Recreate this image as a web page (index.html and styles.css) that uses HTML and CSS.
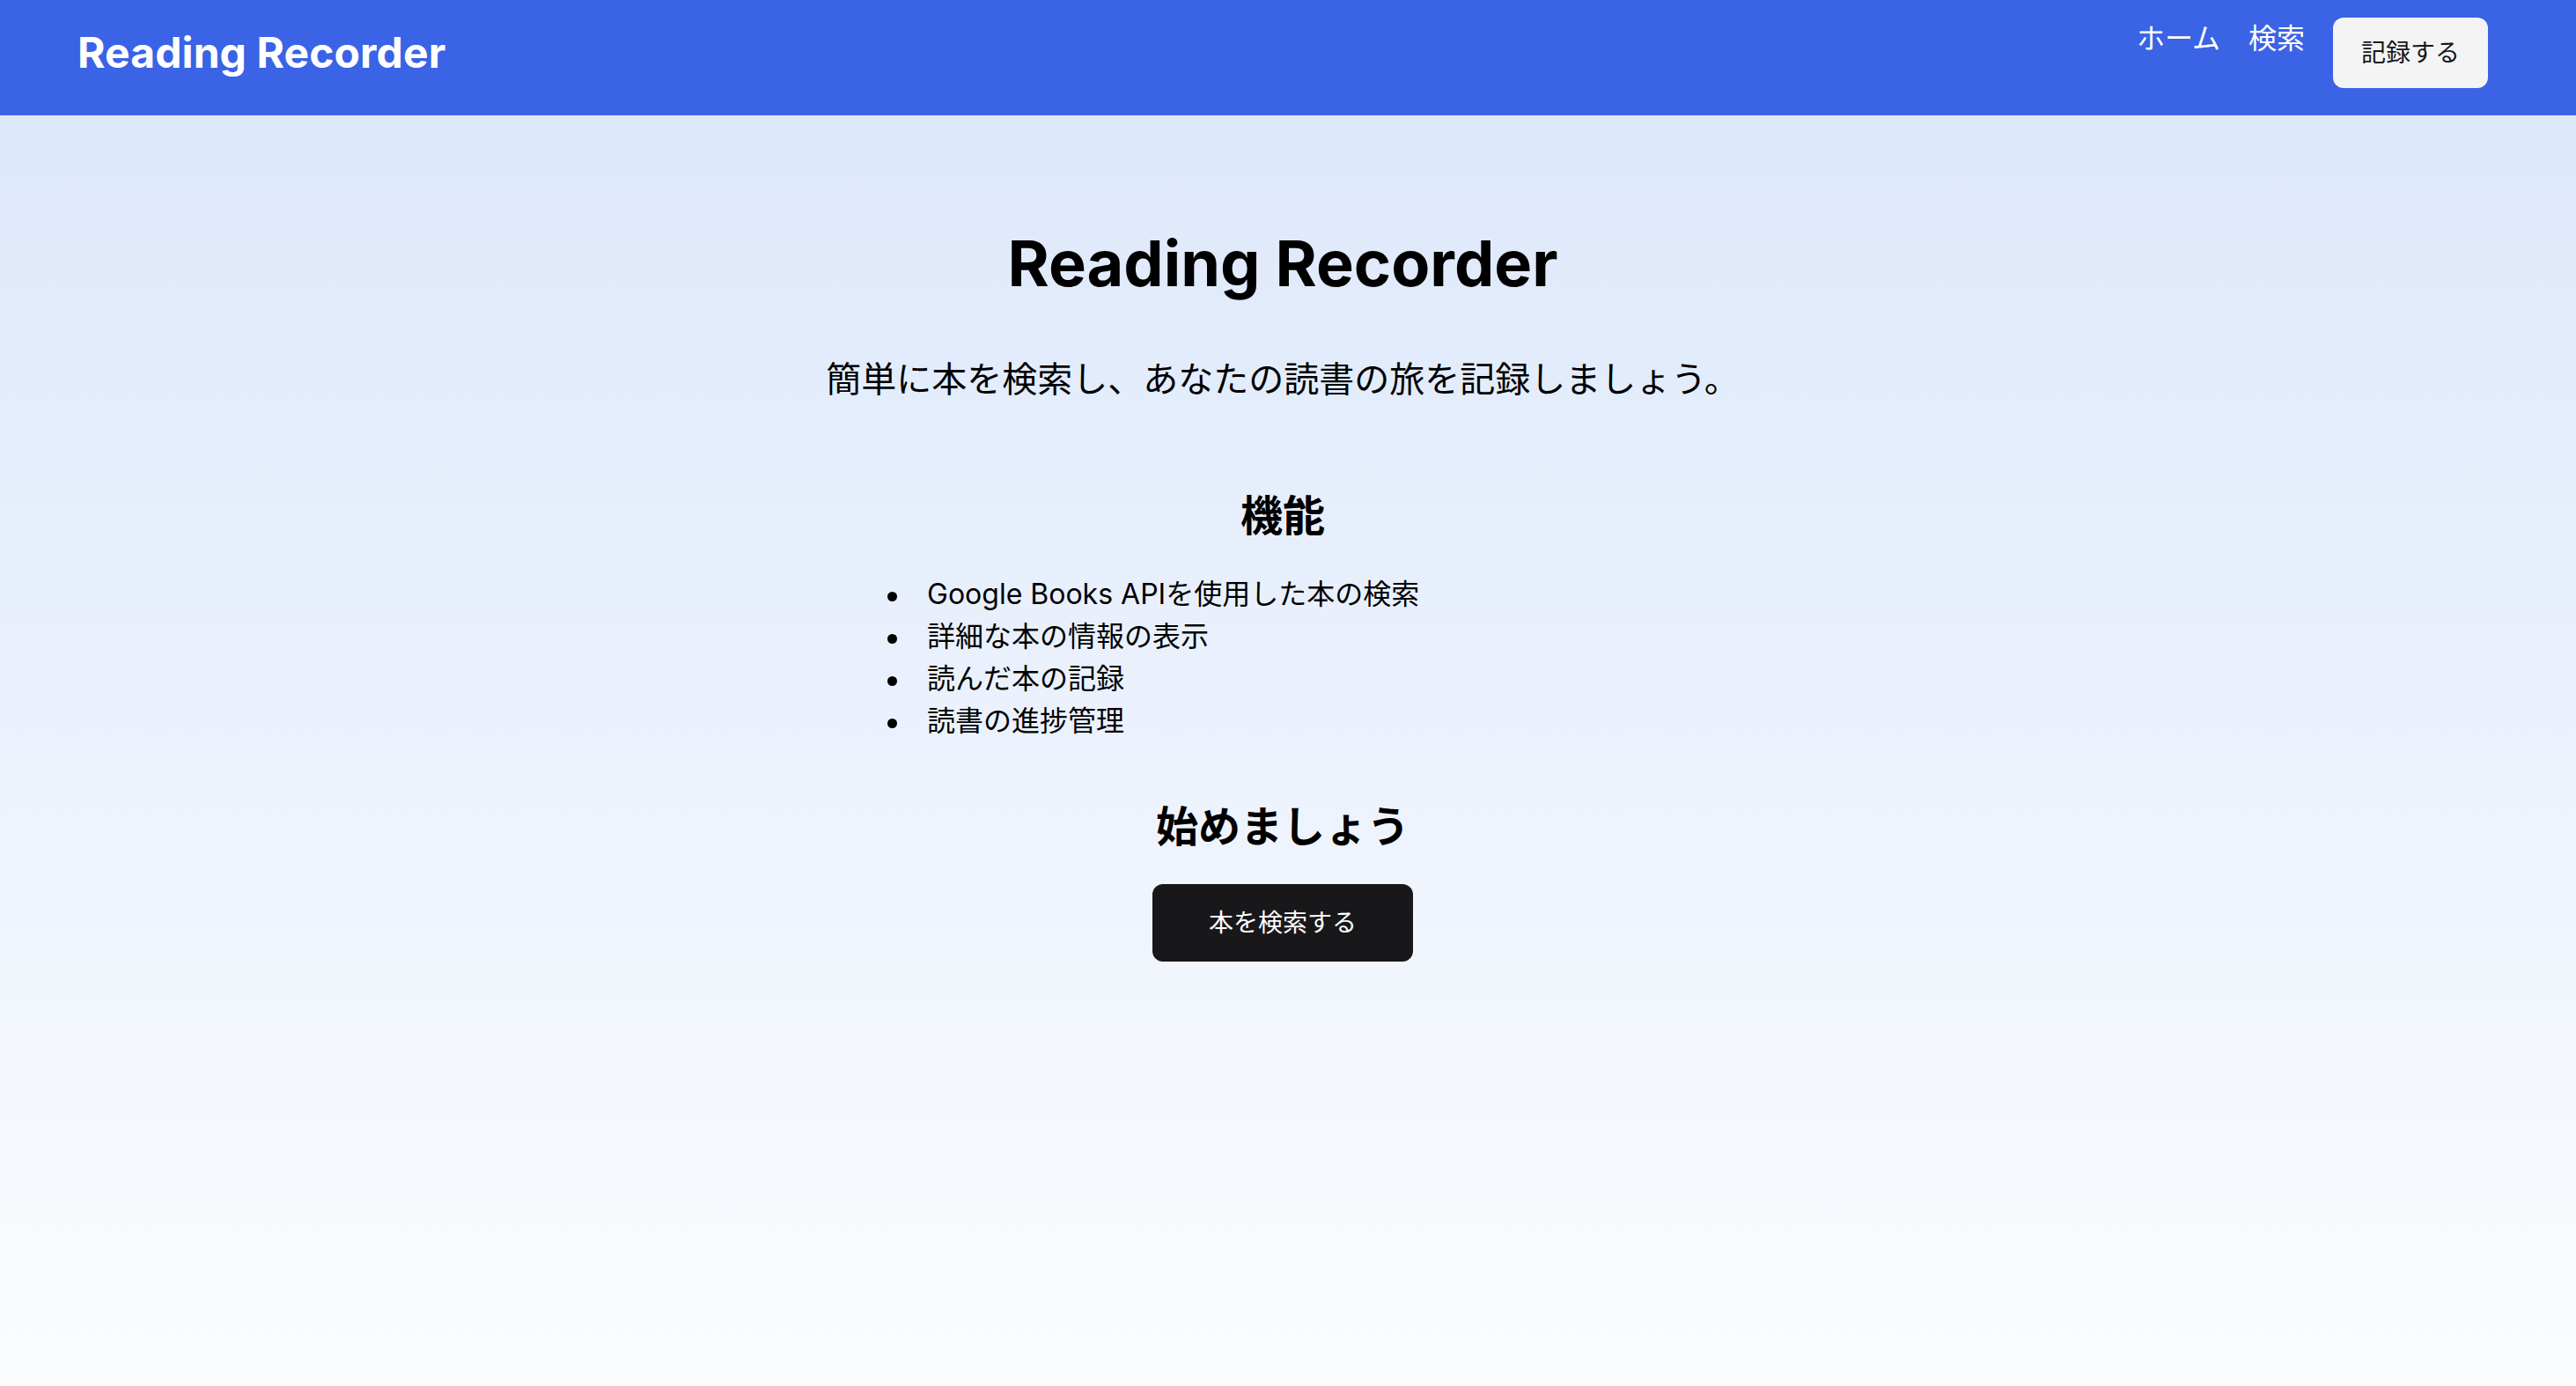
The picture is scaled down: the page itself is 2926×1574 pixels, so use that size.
FILE: index.html
```html
<!DOCTYPE html>
<html lang="ja">
<head>
<meta charset="utf-8">
<title>Reading Recorder</title>
<link rel="stylesheet" href="styles.css">
</head>
<body>
<header class="site-header">
  <a class="logo" href="#">Reading Recorder</a>
  <nav class="nav">
    <a class="nav-link" href="#">ホーム</a>
    <a class="nav-link" href="#">検索</a>
    <a class="nav-button" href="#">記録する</a>
  </nav>
</header>
<main class="main">
  <div class="content">
    <h1 class="title">Reading Recorder</h1>
    <p class="lead">簡単に本を検索し、あなたの読書の旅を記録しましょう。</p>
    <h2 class="section-title">機能</h2>
    <ul class="features">
      <li>Google Books APIを使用した本の検索</li>
      <li>詳細な本の情報の表示</li>
      <li>読んだ本の記録</li>
      <li>読書の進捗管理</li>
    </ul>
    <h2 class="section-title start-title">始めましょう</h2>
    <a class="primary-button" href="#">本を検索する</a>
  </div>
</main>
</body>
</html>
```
FILE: styles.css
```css
* {
  box-sizing: border-box;
}

html, body {
  margin: 0;
  padding: 0;
}

body {
  font-family: "Inter", "Noto Sans CJK JP", sans-serif;
  color: #000;
  background: #fbfcfe;
  min-height: 100vh;
}

a {
  text-decoration: none;
}

.site-header {
  height: 131px;
  background: #3a63e5;
  display: flex;
  justify-content: space-between;
  align-items: flex-start;
  padding: 20px 100px 0 88px;
}

.logo {
  font-size: 48px;
  line-height: 80px;
  font-weight: 700;
  color: #fff;
  letter-spacing: 0.1px;
}

.nav {
  display: flex;
  align-items: flex-start;
  gap: 32px;
}

.nav-link {
  font-size: 32px;
  line-height: 48px;
  color: #fff;
}

.nav-button {
  font-size: 28px;
  line-height: 40px;
  padding: 20px 32px;
  background: #f4f4f5;
  color: #18181b;
  border-radius: 12px;
}

.main {
  min-height: 1443px;
  background: linear-gradient(to bottom, #dde8fb 0%, #fbfcfe 100%);
  padding: 128px 12px 0 0;
}

.content {
  display: flex;
  flex-direction: column;
  align-items: center;
  text-align: center;
}

.title {
  margin: 0 0 64px;
  font-size: 72px;
  line-height: 80px;
  font-weight: 700;
  letter-spacing: 0;
}

.lead {
  margin: 0 0 95px;
  font-size: 40px;
  line-height: 56px;
}

.section-title {
  margin: 0 0 33px;
  font-size: 48px;
  line-height: 64px;
  font-weight: 700;
}

.start-title {
  margin-top: 64px;
}

.features {
  list-style: none;
  margin: 0;
  padding: 0;
  width: 898px;
  text-align: left;
}

.features li {
  display: flex;
  align-items: center;
  font-size: 32px;
  line-height: 48px;
}

.features li::before {
  content: "";
  flex: none;
  width: 11px;
  height: 11px;
  border-radius: 50%;
  background: #000;
  margin: 5px 34px 0 0;
}

.primary-button {
  font-size: 28px;
  line-height: 40px;
  padding: 24px 64px;
  background: #18181b;
  color: #fff;
  border-radius: 12px;
}
```
